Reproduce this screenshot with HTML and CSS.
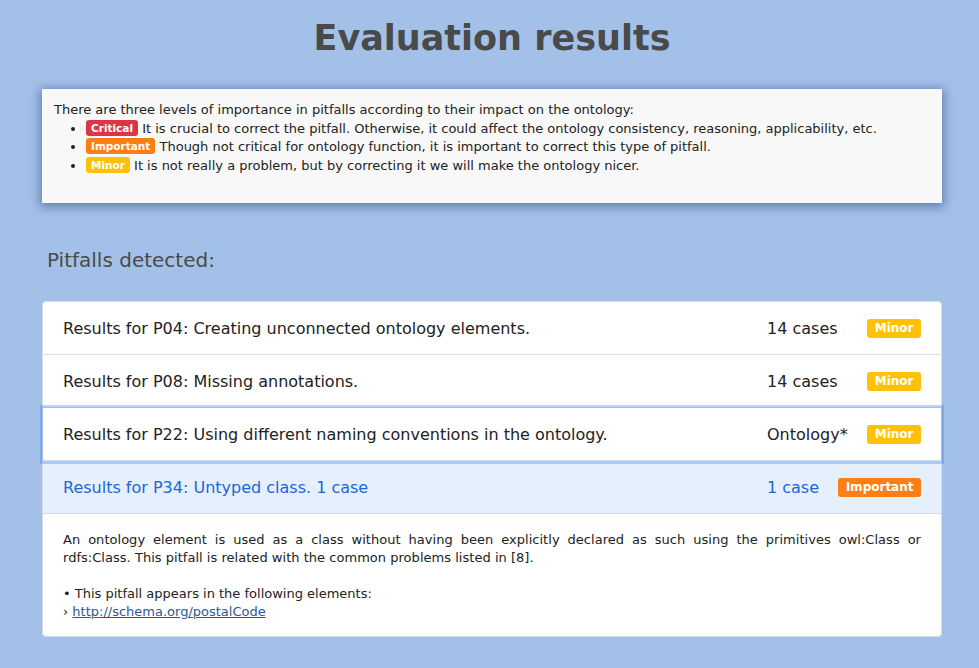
FILE: index.html
```html
<!DOCTYPE html>
<html>
<head>
<meta charset="utf-8">
<link rel="stylesheet" href="styles.css">
</head>
<body>
<h1 class="title">Evaluation results</h1>
<div class="info">
  <p class="intro">There are three levels of importance in pitfalls according to their impact on the ontology:</p>
  <ul class="levels">
    <li><span class="badge critical">Critical</span> It is crucial to correct the pitfall. Otherwise, it could affect the ontology consistency, reasoning, applicability, etc.</li>
    <li><span class="badge important">Important</span> Though not critical for ontology function, it is important to correct this type of pitfall.</li>
    <li><span class="badge minor">Minor</span> It is not really a problem, but by correcting it we will make the ontology nicer.</li>
  </ul>
</div>
<h2 class="subtitle">Pitfalls detected:</h2>
<div class="list">
  <div class="row">
    <span class="row-title">Results for P04: Creating unconnected ontology elements.</span>
    <span class="meta"><span class="count">14 cases</span><span class="badge big minor">Minor</span></span>
  </div>
  <div class="row">
    <span class="row-title">Results for P08: Missing annotations.</span>
    <span class="meta"><span class="count">14 cases</span><span class="badge big minor">Minor</span></span>
  </div>
  <div class="row focused">
    <span class="row-title">Results for P22: Using different naming conventions in the ontology.</span>
    <span class="meta"><span class="count">Ontology*</span><span class="badge big minor">Minor</span></span>
  </div>
  <div class="row active">
    <span class="row-title">Results for P34: Untyped class. 1 case</span>
    <span class="meta"><span class="count">1 case</span><span class="badge big important">Important</span></span>
  </div>
  <div class="detail">
    <p class="desc">An ontology element is used as a class without having been explicitly declared as such using the primitives owl:Class or rdfs:Class. This pitfall is related with the common problems listed in [8].</p>
    <p class="appears">• This pitfall appears in the following elements:<br>› <a class="link" href="#">http://schema.org/postalCode</a></p>
  </div>
</div>
</body>
</html>
```
FILE: styles.css
```css
html, body {
  margin: 0;
  padding: 0;
}
body {
  background: #a3c1e8;
  font-family: "DejaVu Sans", Verdana, sans-serif;
  color: #222;
  padding: 0 37px 0 42px;
  min-height: 668px;
  box-sizing: border-box;
}
.title {
  margin: 0;
  padding-top: 17px;
  height: 72px;
  box-sizing: border-box;
  text-align: center;
  font-size: 35px;
  font-weight: bold;
  color: #4a4a4a;
  line-height: 42px;
}
.info {
  background: #f8f8f8;
  box-shadow: 0 2px 10px 2px rgba(40, 70, 140, 0.55);
  padding: 12px 12px 10px 12px;
  height: 114px;
  box-sizing: border-box;
  margin-top: 17px;
  font-size: 13px;
  line-height: 18.5px;
  color: #222;
}
.intro {
  margin: 0;
}
.levels {
  margin: 0;
  padding-left: 32px;
}
.badge {
  display: inline-block;
  color: #fff;
  font-weight: bold;
  border-radius: 3px;
  font-size: 10.5px;
  line-height: 14px;
  padding: 1px 5px;
  vertical-align: 1px;
}
.critical { background: #dc3545; }
.important { background: #fd7e14; }
.minor { background: #ffc107; }
.subtitle {
  margin: 45px 0 0 5px;
  font-size: 20px;
  font-weight: normal;
  color: #4a4a4a;
  line-height: 24px;
}
.list {
  margin-top: 29px;
  background: #fff;
  border: 1px solid #d6dce4;
  border-radius: 4px;
}
.row {
  display: flex;
  align-items: center;
  height: 53px;
  box-sizing: border-box;
  padding: 0 20px;
  border-bottom: 1px solid #dcdcdc;
  font-size: 16px;
  color: #222;
}
.row-title {
  flex: 1;
}
.meta {
  width: 154px;
  display: flex;
  align-items: center;
  justify-content: space-between;
}
.badge.big {
  font-size: 12px;
  line-height: 15px;
  padding: 2px 7.5px;
  vertical-align: 0;
}
.row.focused {
  position: relative;
  z-index: 1;
  box-shadow: 0 0 0 3px rgba(30, 120, 240, 0.3);
}
.row.active {
  background: #e6f0fc;
  color: #1a66dd;
  border-bottom: 1px solid #d0dcea;
}
.detail {
  padding: 17px 20px 15px 20px;
  font-size: 13px;
  line-height: 18px;
  color: #222;
}
.desc {
  margin: 0;
  text-align: justify;
  letter-spacing: 0.03px;
}
.appears {
  margin: 18px 0 0 0;
}
.link {
  color: #2b5797;
  text-decoration: underline;
}
```
